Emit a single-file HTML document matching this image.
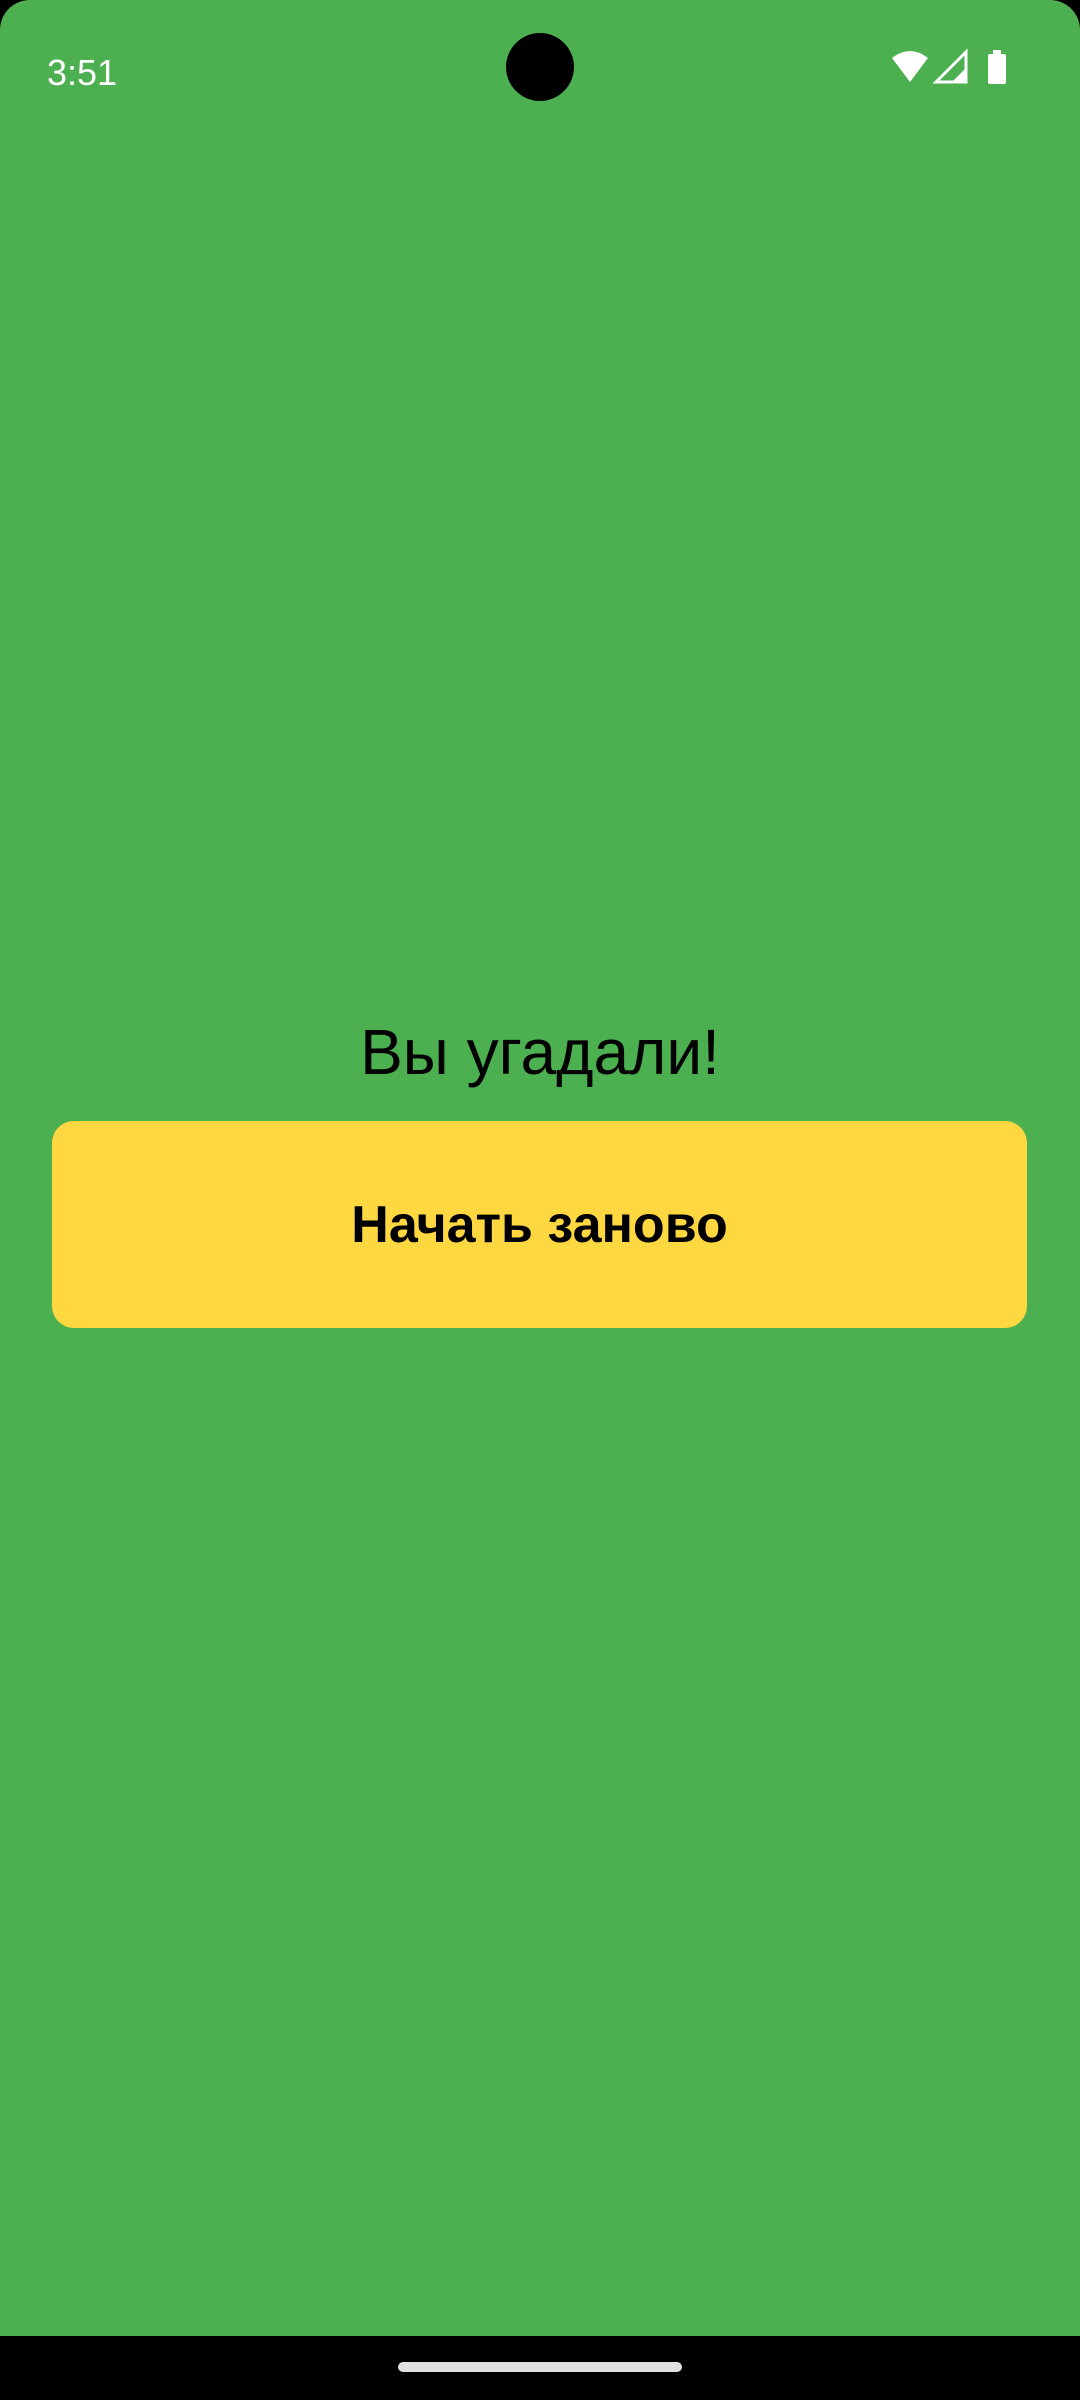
<!DOCTYPE html>
<html><head><meta charset="utf-8"><style>
html,body{margin:0;padding:0;background:#000}
body{width:1080px;height:2400px;position:relative;overflow:hidden;font-family:"Liberation Sans",sans-serif}
.bg{position:absolute;left:0;top:0;width:1080px;height:2400px;background:#4CAF50;border-radius:30px 30px 0 0}
.time{position:absolute;left:47px;top:52px;font-size:36px;color:#fff}
.cam{position:absolute;left:506px;top:33px;width:68px;height:68px;border-radius:50%;background:#000}
.title{position:absolute;left:0;width:1080px;top:1015px;text-align:center;font-size:64px;color:#000}
.btn{position:absolute;left:52px;top:1121px;width:975px;height:207px;background:#FFD740;border-radius:22px;display:flex;align-items:center;justify-content:center;font-weight:bold;font-size:52px;color:#000}
.nav{position:absolute;left:0;top:2336px;width:1080px;height:64px;background:#000}
.handle{position:absolute;left:398px;top:2362px;width:284px;height:10px;border-radius:5px;background:#e0e0e0}
</style></head><body>
<div class="bg"></div>
<div class="time">3:51</div>
<div class="cam"></div>
<svg style="position:absolute;left:890px;top:48px" width="120" height="40" viewBox="0 0 120 40">
<path d="M2 10 Q20 -4 38 10 L20 34 Z" fill="#fff"/>
<path d="M46 34 L76 4 L76 34 Z" fill="none" stroke="#fff" stroke-width="3"/>
<path d="M62 34 L76 20 L76 34 Z" fill="#fff"/>
<rect x="98" y="6" width="18" height="30" rx="2" fill="#fff"/>
<rect x="103" y="2" width="8" height="5" fill="#fff"/>
</svg>
<div class="title">Вы угадали!</div>
<div class="btn">Начать заново</div>
<div class="nav"></div>
<div class="handle"></div>
</body></html>
